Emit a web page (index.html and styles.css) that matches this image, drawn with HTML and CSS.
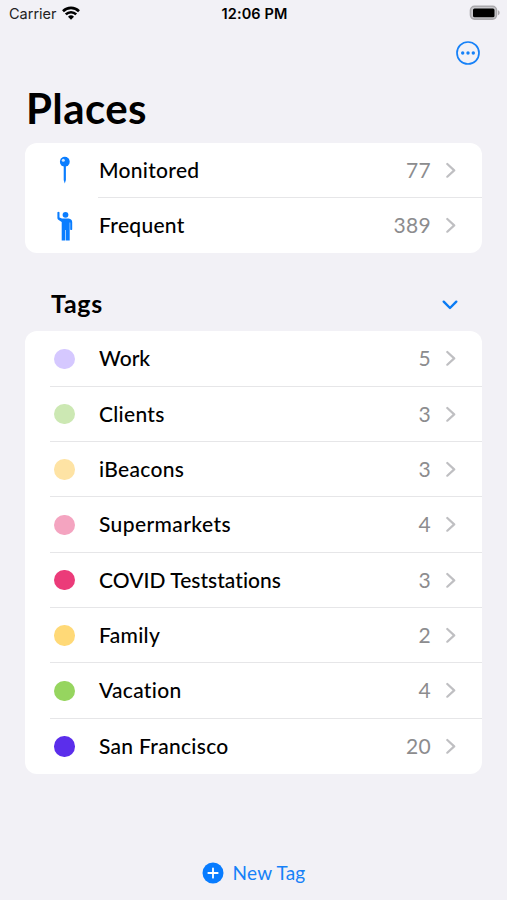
FILE: index.html
```html
<!DOCTYPE html>
<html lang="en">
<head>
<meta charset="utf-8">
<title>Places</title>
<link rel="stylesheet" href="styles.css">
</head>
<body>
<svg class="defs" width="0" height="0"><defs>
<symbol id="chev" viewBox="0 0 10 16"><path d="M1.3 2 8.200 8.400l-6.900 6.300" fill="none" stroke="currentColor" stroke-width="2.200" stroke-linecap="round" stroke-linejoin="round"/></symbol>
</defs></svg>
<header class="status">
  <div class="carrier"><span>Carrier</span>
    <svg width="18" height="14" viewBox="0 0 18 14"><g fill="none" stroke="#000" stroke-width="2.600"><path d="M1 5.200a11.400 11.400 0 0 1 16 0"/><path d="M3.800 8.400a7.400 7.400 0 0 1 10.400 0"/></g><path d="M6 10.800a4.300 4.300 0 0 1 6 0L9 13.800z"/></svg>
  </div>
  <div class="time">12:06 PM</div>
  <svg class="battery" width="31" height="16" viewBox="0 0 31 16"><rect x="1.500" y="1.300" width="26" height="12.800" rx="4" fill="#c9c8cc" stroke="#aaa9ad" stroke-width="1.600"/><rect x="4" y="3.400" width="21.500" height="8.800" rx="1.500"/><path d="M29 5.300v5c2.200-.8 2.200-4.200 0-5z" fill="#aaa9ad"/></svg>
</header>
<nav class="toolbar">
  <svg width="24" height="24" viewBox="0 0 24 24"><circle cx="12" cy="12" r="11" fill="none" stroke="#1681f8" stroke-width="1.700"/><g fill="#1681f8"><circle cx="6.700" cy="12" r="1.700"/><circle cx="12" cy="12" r="1.700"/><circle cx="17.300" cy="12" r="1.700"/></g></svg>
</nav>
<h1>Places</h1>
<ul class="card places">
  <li><span class="icon"><svg width="12" height="28" viewBox="0 0 12 28"><path d="M4.700 9h2.200v15L5.800 27.400 4.700 24z" fill="#0a7dff"/><circle cx="5.800" cy="5.700" r="4.900" fill="#0a7dff"/><circle cx="4.300" cy="4.200" r="1.500" fill="#cfe5ff"/></svg></span><div class="cell"><span class="label">Monitored</span><span class="count">77</span><svg class="chev"><use href="#chev"/></svg></div></li>
  <li><span class="icon"><svg width="16" height="30" viewBox="0 0 16 30"><g fill="#0a7dff"><circle cx="8.500" cy="3.800" r="2.900"/><path d="M.4 1.200Q1.500.3 2.500 1.200V6.500L5 7.400h6.600Q15.200 7.800 15.200 11.200v7.300q-1 1.100-2 0v-7h-.5V29.500H8.900V19h-.6v10.500H4.700V11L1.300 8.800Q.4 8.100.4 7z"/></g></svg></span><div class="cell"><span class="label">Frequent</span><span class="count">389</span><svg class="chev"><use href="#chev"/></svg></div></li>
</ul>
<div class="section"><h2>Tags</h2><svg width="16" height="10" viewBox="0 0 16 10"><path d="M1.700 1.700 8 8l6.300-6.300" fill="none" stroke="#0a7bf4" stroke-width="2.400" stroke-linecap="round" stroke-linejoin="round"/></svg></div>
<ul class="card tags">
  <li><div class="cell"><i class="dot work"></i><span class="label tight">Work</span><span class="count">5</span><svg class="chev"><use href="#chev"/></svg></div></li>
  <li><div class="cell"><i class="dot clients"></i><span class="label">Clients</span><span class="count">3</span><svg class="chev"><use href="#chev"/></svg></div></li>
  <li><div class="cell"><i class="dot beacons"></i><span class="label">iBeacons</span><span class="count">3</span><svg class="chev"><use href="#chev"/></svg></div></li>
  <li><div class="cell"><i class="dot markets"></i><span class="label loose">Supermarkets</span><span class="count">4</span><svg class="chev"><use href="#chev"/></svg></div></li>
  <li><div class="cell"><i class="dot covid"></i><span class="label tight">COVID Teststations</span><span class="count">3</span><svg class="chev"><use href="#chev"/></svg></div></li>
  <li><div class="cell"><i class="dot family"></i><span class="label">Family</span><span class="count">2</span><svg class="chev"><use href="#chev"/></svg></div></li>
  <li><div class="cell"><i class="dot vacation"></i><span class="label">Vacation</span><span class="count">4</span><svg class="chev"><use href="#chev"/></svg></div></li>
  <li><div class="cell"><i class="dot sf"></i><span class="label">San Francisco</span><span class="count">20</span><svg class="chev"><use href="#chev"/></svg></div></li>
</ul>
<footer><svg width="22" height="22" viewBox="0 0 22 22"><circle cx="11" cy="11" r="10.500" fill="#087cff"/><path d="M11 6.300v9.400M6.300 11h9.400" stroke="#fff" stroke-width="1.800" stroke-linecap="round"/></svg><span>New Tag</span></footer>
</body>
</html>
```
FILE: styles.css
```css
* { box-sizing: border-box; }
body { margin: 0; width: 507px; height: 900px; overflow: hidden; background: #f2f1f6; color: #000; font-family: Lato, "Open Sans", sans-serif; display: flex; flex-direction: column; }
.defs { position: absolute; }
.status { height: 28px; display: grid; grid-template-columns: 1fr auto 1fr; align-items: center; padding: 0 7px 1px 9px; font-family: Inter, sans-serif; font-size: 14.5px; }
.carrier { display: flex; align-items: center; gap: 5px; color: #222; }
.carrier svg { margin-top: -2px; }
.time { font-weight: 600; letter-spacing: .1px; }
.battery { justify-self: end; margin-top: -1px; }
.toolbar { height: 50px; display: flex; justify-content: flex-end; align-items: center; padding-right: 27px; }
.toolbar svg { display: block; }
h1 { margin: 0; height: 64.5px; padding: 5px 26px 0; font-size: 42px; line-height: 50px; font-weight: 700; letter-spacing: .4px; }
ul { list-style: none; margin: 0; padding: 0; }
.card { margin: 0 25px; background: #fff; border-radius: 12px; overflow: hidden; }
.card li { height: 55.350px; display: flex; }
.cell { flex: 1; display: flex; align-items: center; border-bottom: 1px solid #e6e6e8; padding-right: 26px; }
.card li:last-child .cell { border-bottom-color: transparent; }
.icon { width: 73px; padding-left: 6px; display: flex; align-items: center; justify-content: center; }
.tags .cell { margin-left: 25px; }
.dot { width: 20.5px; height: 20.5px; border-radius: 50%; margin: 1px 24.5px 0 4px; }
.label { font-size: 21px; font-weight: 500; line-height: 28px; letter-spacing: .3px; flex: 1; white-space: nowrap; }
.tight { letter-spacing: .03px; }
.loose { letter-spacing: .4px; }
.places .label { padding-left: 1px; }
.count { font-size: 21px; line-height: 28px; color: #8c8c8e; letter-spacing: .3px; }
.chev { width: 10px; height: 16px; color: #bfbfc2; margin-left: 15px; }
.section { height: 78px; display: flex; align-items: center; justify-content: space-between; padding: 22px 49px 0 51px; }
.section svg { margin-top: 3px; }
h2 { margin: 0; font-size: 25px; line-height: 32px; font-weight: 700; letter-spacing: .7px; }
.work { background: #d5c8ff; }
.clients { background: #cce8b3; }
.beacons { background: #fee3a4; }
.markets { background: #f4a4c0; }
.covid { background: #eb3b79; }
.family { background: #ffd977; }
.vacation { background: #96d55f; }
.sf { background: #5b2eeb; }
footer { margin-top: 88px; height: 22px; display: flex; align-items: center; justify-content: center; gap: 9px; color: #1681f8; font-size: 19px; line-height: 22px; letter-spacing: .2px; }
```
